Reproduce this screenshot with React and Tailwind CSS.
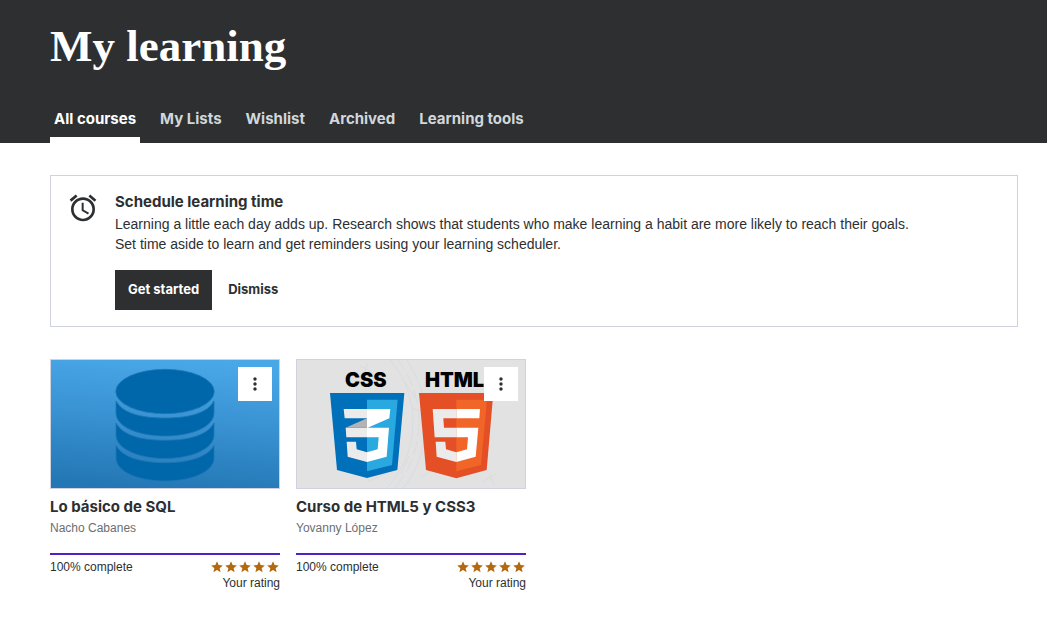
import { MdAlarm, MdMoreVert, MdStar } from 'react-icons/md';

const tabs = ['All courses', 'My Lists', 'Wishlist', 'Archived', 'Learning tools'];

function SqlCover() {
  return (
    <svg viewBox="0 0 228 128" className="block w-full" aria-hidden="true">
      <defs>
        <linearGradient id="sql-sky" x1="0.55" y1="0" x2="0.4" y2="1">
          <stop offset="0" stopColor="#49a7e8" />
          <stop offset="0.5" stopColor="#3890d0" />
          <stop offset="1" stopColor="#2377b4" />
        </linearGradient>
      </defs>
      <rect width="228" height="128" fill="url(#sql-sky)" />
      <g fill="#0068aa" stroke="#1d76b5" strokeWidth="0.8">
        <ellipse cx="114" cy="31.5" rx="49.2" ry="22.2" />
        <path d="M65 41C72 54 92 58 114 58S156 54 163 41V53C163 67 140 76 114 76S65 67 65 53Z" />
        <path d="M65 63C72 76 92 80.300 114 80.300S156 76 163 63V75C163 89 140 98.500 114 98.500S65 89 65 75Z" />
        <path d="M65 85.500C72 98 92 102.700 114 102.700S156 98 163 85.500V98C163 112 140 121 114 121S65 112 65 98Z" />
      </g>
    </svg>
  );
}

function WebCover() {
  return (
    <svg viewBox="0 0 228 128" className="block w-full" aria-hidden="true">
      <rect width="228" height="128" fill="#e2e2e2" />
      <g fill="none" stroke="#d6d9de" strokeWidth="0.7">
        <circle cx="20" cy="62" r="96" />
        <circle cx="20" cy="62" r="102" strokeDasharray="14 5" />
        <circle cx="20" cy="62" r="109" />
        <path d="M62 5l14 8M71 3l-5 12M108 22l10 16M112 96l-8 18M124 118l10-8M70 122l18-8M186 122l14-9M192 114l6 12M116 48l10 4" />
      </g>
      <g fill="#000" className="font-['Inter',sans-serif] text-[20px] font-black">
        <text x="48" y="27">CSS</text>
        <text x="128" y="27">HTML</text>
      </g>
      <g transform="translate(-7 -10) scale(0.33333)">
        <path fill="#0170ba" d="M120 129H343L322 360 231 384 141 360Z" />
        <path fill="#29a9df" d="M231 149H323L306 345 231 364Z" />
        <path fill="#ebebeb" d="M161 177H231V205H164ZM167 233H231V262H169ZM170 275H198L200 298 231 307V336L173 320Z" />
        <path fill="#b3b3b3" d="M167 233L231 205V233Z" />
        <path fill="#fff" d="M231 177H301L298 205 233 233H297L290 320 231 336V307L263 298 266 262H231V205Z" />
        <path fill="#e44f26" d="M387 129H610L590 360 499 385 408 360Z" />
        <path fill="#f16529" d="M499 149H591L573 345 499 364Z" />
        <path fill="#ebebeb" d="M428 177H499V205H460L462 233H499V262H434ZM437 275H466L468 298 499 307V336L440 320Z" />
        <path fill="#fff" d="M499 177H570L568 205H499ZM499 233H565L557 320 499 336V307L531 298 534 262H499Z" />
      </g>
    </svg>
  );
}

const courses = [
  { title: 'Lo básico de SQL', author: 'Nacho Cabanes', Cover: SqlCover },
  { title: 'Curso de HTML5 y CSS3', author: 'Yovanny López', Cover: WebCover },
];

function CourseCard({ title, author, Cover }) {
  return (
    <article className="w-[230px]">
      <div className="relative border border-[#d1d2e0]">
        <Cover />
        <button
          type="button"
          aria-label={`Options for ${title}`}
          className="absolute right-[7px] top-[7px] flex size-[34px] items-center justify-center bg-white"
        >
          <MdMoreVert size={20} />
        </button>
      </div>
      <h3 className="mt-2 text-[15px] leading-5 font-bold">{title}</h3>
      <p className="mt-[3px] font-['Liberation_Sans',sans-serif] text-xs leading-4 text-[#6a6f73]">{author}</p>
      <div className="mt-[17px] h-0.5 bg-[#5022c3]" role="progressbar" aria-label={`${title} progress`} aria-valuenow={100} />
      <div className="mt-1 flex justify-between font-['Liberation_Sans',sans-serif] text-xs leading-4">
        <span>100% complete</span>
        <div className="flex flex-col items-end">
          <span className="flex h-4 items-center text-[#b4690e]" role="img" aria-label="5 out of 5 stars">
            {[1, 2, 3, 4, 5].map((n) => (
              <MdStar key={n} size={14} />
            ))}
          </span>
          <span>Your rating</span>
        </div>
      </div>
    </article>
  );
}

export default function App() {
  return (
    <div className="min-h-screen bg-white font-['Inter',sans-serif] text-[#2d2f31]">
      <header className="bg-[#2d2f31] pr-[29px] pl-[50px] text-white">
        <h1 className="pt-5 font-['Liberation_Serif',serif] text-[45px] leading-[52px] font-bold">My learning</h1>
        <nav className="mt-[33px] flex gap-4 text-[15px] leading-5 font-bold">
          {tabs.map((tab, i) => (
            <a
              key={tab}
              href="#"
              aria-current={i === 0 ? 'page' : undefined}
              className={`border-b-6 px-1 pt-1 pb-2 whitespace-nowrap ${
                i === 0 ? 'border-white text-white' : 'border-transparent text-[#d1d7dc]'
              }`}
            >
              {tab}
            </a>
          ))}
        </nav>
      </header>

      <main className="pt-8 pr-[29px] pb-6 pl-[50px]">
        <section className="flex items-start gap-4 border border-[#d1d2e0] p-4">
          <MdAlarm size={32} className="shrink-0" />
          <div>
            <h2 className="text-[15px] leading-5 font-bold">Schedule learning time</h2>
            <p className="mt-0.5 max-w-[820px] font-['Liberation_Sans',sans-serif] text-sm leading-5">
              Learning a little each day adds up. Research shows that students who make learning a habit are more likely
              to reach their goals.
              <br />
              Set time aside to learn and get reminders using your learning scheduler.
            </p>
            <div className="mt-4 flex gap-4 text-[13px] font-bold">
              <button type="button" className="h-10 bg-[#2d2f31] px-[13px] text-white">
                Get started
              </button>
              <button type="button" className="h-10">
                Dismiss
              </button>
            </div>
          </div>
        </section>

        <section className="mt-8 flex flex-wrap gap-4" aria-label="Courses">
          {courses.map((course) => (
            <CourseCard key={course.title} {...course} />
          ))}
        </section>
      </main>
    </div>
  );
}
